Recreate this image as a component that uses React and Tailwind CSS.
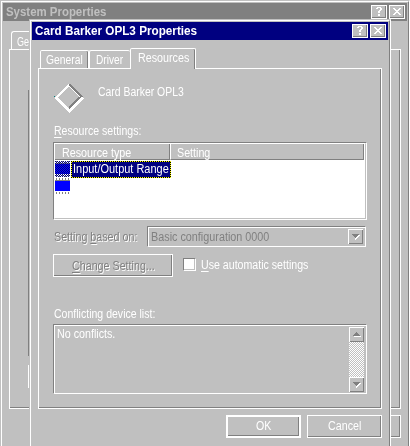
import { useLayoutEffect, useRef, useState } from "react";

// Single line of dialog text, condensed to the width of the bitmap system font.
function Label({ width, className = "", children }) {
  const ref = useRef(null);
  const [scale, setScale] = useState(1);
  useLayoutEffect(() => {
    setScale(width / ref.current.offsetWidth);
  }, [width]);
  return (
    <span className={"block h-[14px] shrink-0 text-[12px] leading-[14px] whitespace-nowrap " + className} style={{ width }}>
      <span ref={ref} className="inline-block origin-left" style={{ transform: `scaleX(${scale})` }}>
        {children}
      </span>
    </span>
  );
}

const U = ({ children }) => <span className="underline decoration-1 underline-offset-2">{children}</span>;

const QUESTION = [".####.", "##..##", "....##", "...##.", "..##..", "..##..", "......", "..##..", "..##.."];
const CROSS = ["##....##", ".##..##.", "..####..", "...##...", "..####..", ".##..##.", "##....##"];

function Pixels({ rows, className = "" }) {
  const w = rows[0].length;
  return (
    <svg width={w} height={rows.length} className={"block shrink-0 " + className} shapeRendering="crispEdges">
      {rows.flatMap((row, y) =>
        [...row].map((c, x) => (c === "#" ? <rect key={x + "-" + y} x={x} y={y} width="1" height="1" fill="currentColor" /> : null))
      )}
    </svg>
  );
}

function TitleBar({ title, width, active }) {
  const button = "flex h-[14px] w-4 border border-white bg-[#c0c0c0] text-white shadow-[inset_-1px_-1px_0_#808080]";
  return (
    <div className={"flex h-[18px] shrink-0 items-start pr-[2px] pl-[3px] pt-[2px] " + (active ? "bg-[#000080] text-white" : "bg-[#808080] text-[#c0c0c0]")}>
      <Label width={width} className="font-bold">{title}</Label>
      <div className="ml-auto flex gap-[2px]">
        <div className={button}><Pixels rows={QUESTION} className="mt-[1px] ml-1" /></div>
        <div className={button}><Pixels rows={CROSS} className="mt-[2px] ml-[3px]" /></div>
      </div>
    </div>
  );
}

function Window({ className = "", children }) {
  return (
    <div className={"border-t border-r border-l border-t-[#c0c0c0] border-r-white border-l-[#c0c0c0] bg-[#c0c0c0] " + className}>
      <div className="flex h-full flex-col border-t border-r border-l border-t-white border-r-[#808080] border-l-white p-[1px]">
        {children}
      </div>
    </div>
  );
}

function Button({ label, width, className }) {
  return (
    <div className={"flex h-[23px] shrink-0 justify-center border-white shadow-[inset_-1px_-1px_0_#808080] " + className}>
      {label && <Label width={width}>{label}</Label>}
    </div>
  );
}

function Arrow({ up }) {
  return (
    <svg width="9" height="6" viewBox="0 0 9 6" className="block" shapeRendering="crispEdges">
      {up ? (
        <>
          <path d="M3 0h1v1h1v1h1v1h1v1H0V3h1V2h1V1h1z" fill="#808080" />
          <path d="M1 4h7v1H1z" fill="#fff" />
        </>
      ) : (
        <>
          <path d="M7 1h1v1H7v1H6v1H5v1H4v1H3V4h1V3h1V2h1V1z" fill="#fff" />
          <path d="M0 0h7v1H6v1H5v1H4v1H3V3H2V2H1V1H0z" fill="#808080" />
        </>
      )}
    </svg>
  );
}

function ArrowButton({ up }) {
  return (
    <div className="flex h-[15px] w-[15px] shrink-0 items-center justify-center border-t border-l border-white bg-[#c0c0c0] shadow-[inset_-1px_-1px_0_#808080]">
      <Arrow up={up} />
    </div>
  );
}

function DeviceIcon() {
  return (
    <svg width="30" height="29" viewBox="0 0 30 29" className="block shrink-0" shapeRendering="crispEdges">
      <path d="M15 0L30 14L15 29L0 14z" fill="#fff" />
      <path d="M15 0h1L29 12v1h-2L15 2z" fill="#808080" />
      <path d="M15 3L26 13.5L15 25L4 13.5z" fill="#c0c0c0" />
      <path d="M26 13h1L15 26v-4L24 13z" fill="#808080" />
      <rect x="0" y="12" width="1" height="1" fill="#008080" />
    </svg>
  );
}

function ChipIcon({ selected }) {
  const pins = [0, 3, 6, 9, 12];
  return (
    <svg width="15" height="17" className="block shrink-0" shapeRendering="crispEdges">
      <defs>
        <pattern id="dither" width="2" height="2" patternUnits="userSpaceOnUse">
          <path d="M0 0h1v1H0zM1 1h1v1H1z" fill="#000080" />
        </pattern>
      </defs>
      {pins.map((x) => (
        <path key={x} d={`M${x + 1} 0h1v2h-1zM${x + 1} 14h1v2h-1z`} fill="#808080" />
      ))}
      <path d="M0 2h15v1H0z" fill="#808080" />
      <path d="M0 3h15v10H0z" fill="#0000ff" />
      {selected && <path d="M0 0h15v16H0z" fill="url(#dither)" />}
    </svg>
  );
}

export default function App() {
  return (
    <div className="relative h-[446px] w-[410px] overflow-hidden bg-[#c0c0c0] font-['Liberation_Sans',Arial,sans-serif] text-white">
      <Window className="h-full w-[410px]">
        <TitleBar title="System Properties" width={100} />
        <div className="mt-[10px] ml-2 h-[18px] w-[50px] rounded-tl-[3px] border-t border-l border-white pt-[3px] pl-[5px]">
          <Label width={12}>Ge</Label>
        </div>
        <div className="ml-[6px] h-[360px] w-[392px] shrink-0 border border-white pt-10 pl-[18px] shadow-[inset_-1px_-1px_0_#808080]">
          <div className="h-[266px] border-l border-[#808080]" />
          <div className="mt-[9px] h-[23px] w-10 border-l border-white" />
        </div>
        <Button className="mt-[6px] mr-[6px] w-[75px] self-end border" />
      </Window>

      <Window className="absolute top-[19px] left-[29px] h-[427px] w-[362px]">
        <TitleBar title="Card Barker OPL3 Properties" width={162} active />

        <div className="mt-2 flex h-5 shrink-0 items-end pl-2">
          <div className="h-[18px] w-[49px] rounded-t-[2px] border-t border-r border-l border-white pt-[2px] pl-[5px] shadow-[inset_-1px_0_0_#808080]">
            <Label width={37}>General</Label>
          </div>
          <div className="h-[18px] w-[41px] rounded-t-[2px] border-t border-l border-white pt-[2px] pl-[6px]">
            <Label width={27}>Driver</Label>
          </div>
          <div className="z-10 -mb-px h-[21px] w-[66px] rounded-t-[2px] border-t border-r border-l border-white bg-[#c0c0c0] pt-[2px] pl-[7px] shadow-[inset_-1px_0_0_#808080]">
            <Label width={51}>Resources</Label>
          </div>
        </div>

        <div className="ml-[6px] flex h-[341px] w-[344px] shrink-0 flex-col border border-white pr-[14px] pl-[14px] shadow-[inset_-1px_-1px_0_#808080]">
          <div className="mt-[15px] flex h-10 shrink-0 pl-[1px]">
            <DeviceIcon />
            <Label width={86} className="mt-[1px] ml-[14px]">Card Barker OPL3</Label>
          </div>

          <Label width={87} className="ml-[1px]"><U>R</U>esource settings:</Label>

          <div className="mt-1 h-[78px] shrink-0 border border-t-[#808080] border-r-white border-b-white border-l-[#808080]">
            <div className="h-full border border-t-white border-r-[#c0c0c0] border-b-[#c0c0c0] border-l-white bg-white">
              <div className="flex h-4">
                <div className="w-[115px] border-r border-b border-[#808080] bg-[#c0c0c0] pt-[2px] pl-[7px]">
                  <Label width={69}>Resource type</Label>
                </div>
                <div className="w-[194px] border-r border-b border-l border-r-[#808080] border-b-[#808080] border-l-white bg-[#c0c0c0] pt-[2px] pl-[6px]">
                  <Label width={33}>Setting</Label>
                </div>
              </div>
              <div className="mt-px flex h-[17px] gap-[1px]">
                <ChipIcon selected />
                <div className="w-[100px] bg-[repeating-conic-gradient(#ff0_0_25%,#000_0_50%)] bg-[length:2px_2px] p-px">
                  <div className="h-[15px] bg-[#000080] pl-[1px]">
                    <Label width={96}>Input/Output Range</Label>
                  </div>
                </div>
              </div>
              <ChipIcon />
            </div>
          </div>

          <div className="mt-[6px] flex h-[21px] shrink-0">
            <Label width={83} className="mt-1 ml-[1px] text-[#808080] [text-shadow:1px_1px_0_#fff]">Setting <U>b</U>ased on:</Label>
            <div className="ml-[10px] w-[219px] border border-t-[#808080] border-r-white border-b-white border-l-[#808080]">
              <div className="flex h-full justify-between border-t border-l border-white pt-[1px] pr-[2px] pl-[2px]">
                <Label width={118} className="mt-[1px] text-[#808080]">Basic configuration 0000</Label>
                <ArrowButton />
              </div>
            </div>
          </div>

          <div className="mt-[7px] flex h-[23px] shrink-0">
            <Button
              label={<><U>C</U>hange Setting...</>}
              width={83}
              className="w-[120px] border pt-[4px] text-[#808080] [text-shadow:1px_1px_0_#fff]"
            />
            <div className="mt-1 ml-[10px] h-[13px] w-[13px] border border-t-[#808080] border-r-white border-b-white border-l-[#808080] bg-white shadow-[inset_-1px_-1px_0_#c0c0c0]" />
            <Label width={107} className="mt-[4px] ml-[5px]"><U>U</U>se automatic settings</Label>
          </div>

          <Label width={101} className="mt-[30px] ml-[1px]">Conflicting device list:</Label>
          <div className="mt-[3px] h-[70px] shrink-0 border border-t-[#808080] border-r-white border-b-white border-l-[#808080]">
            <div className="flex h-full justify-between border-t border-l border-white pt-[1px] pr-[2px] pl-[2px]">
              <Label width={58}>No conflicts.</Label>
              <div className="flex h-[65px] w-[15px] flex-col">
                <ArrowButton up />
                <div className="flex-1 bg-[repeating-conic-gradient(#fff_0_25%,#c0c0c0_0_50%)] bg-[length:2px_2px]" />
                <ArrowButton />
              </div>
            </div>
          </div>
        </div>

        <div className="mt-[6px] mr-[6px] flex shrink-0 justify-end gap-[6px]">
          <Button label="OK" width={15} className="w-[75px] border-2 pt-[2px]" />
          <Button label="Cancel" width={33} className="w-[75px] border pt-[3px]" />
        </div>
      </Window>
    </div>
  );
}
